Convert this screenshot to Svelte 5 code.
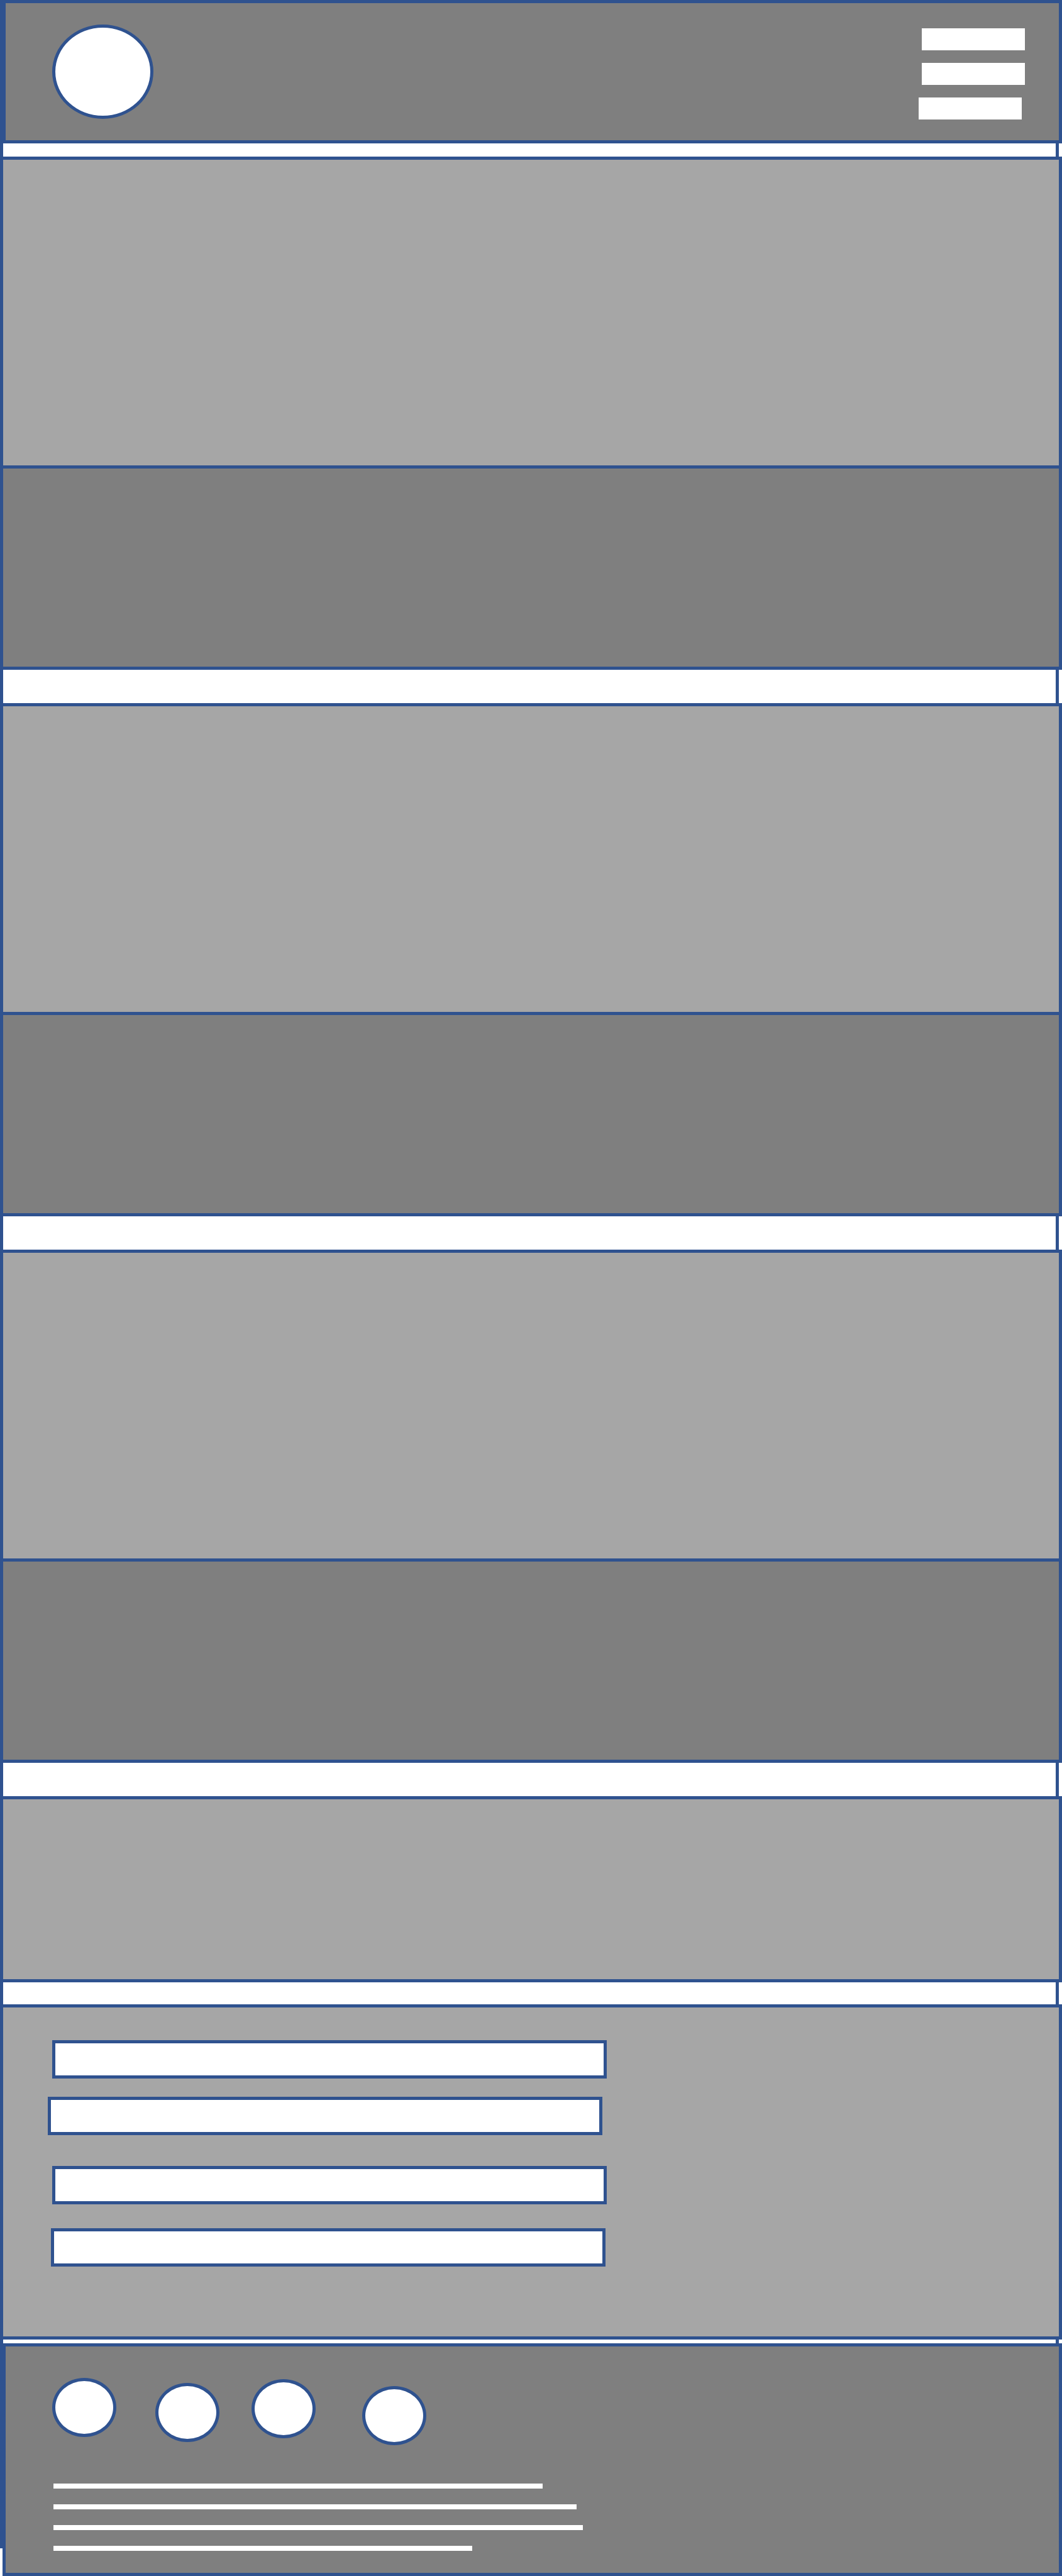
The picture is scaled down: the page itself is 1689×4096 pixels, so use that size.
<script>
  const features = ['first', 'second', 'third'];

  const fields = [
    { id: 'name', label: 'Name', type: 'text' },
    { id: 'email', label: 'Email', type: 'email' },
    { id: 'phone', label: 'Phone', type: 'tel' },
    { id: 'message', label: 'Message', type: 'text' },
  ];

  const socials = ['one', 'two', 'three', 'four'];

  // Lengths of the footer text lines, relative to the longest one.
  const lengths = [778, 832, 842, 666];
  const longest = Math.max(...lengths);
</script>

<div class="page">
  <header class="bar">
    <a class="disc logo" href="#home" aria-label="Home"></a>
    <button class="menu" type="button" aria-label="Menu">
      <span></span>
      <span></span>
      <span></span>
    </button>
  </header>

  <main>
    <div class="features">
      {#each features as feature (feature)}
        <article>
          <div class="picture"></div>
          <div class="caption"></div>
        </article>
      {/each}
      <section class="banner"></section>
    </div>

    <form class="contact">
      <div class="fields">
        {#each fields as field (field.id)}
          <input class={field.id} type={field.type} aria-label={field.label} />
        {/each}
      </div>
    </form>
  </main>

  <footer class="bar">
    <nav class="socials" aria-label="Social links">
      {#each socials as social (social)}
        <a class="disc {social}" href="#{social}" aria-label="Social link {social}"></a>
      {/each}
    </nav>
    <div class="lines">
      {#each lengths as length}
        <span style:width="{(length / longest) * 100}%"></span>
      {/each}
    </div>
  </footer>
</div>

<style>
  :global(body) {
    margin: 0;
    background: #fff;
    font-family: 'Liberation Sans', Arial, sans-serif;
  }

  .page,
  .page * {
    box-sizing: border-box;
  }

  /* The outer frame shows as two vertical rules in the gaps between bands. */
  .page {
    --line: #2f528f;
    --dark: #7f7f7f;
    --light: #a6a6a6;
    --edge: 5px solid var(--line);
    background:
      linear-gradient(var(--line), var(--line)) left top / 5px calc(100% - 44px) no-repeat,
      linear-gradient(var(--line), var(--line)) right 5px top / 5px calc(100% - 44px) no-repeat,
      #fff;
  }

  .bar {
    margin-left: 4px;
    border: var(--edge);
    background: var(--dark);
  }

  header {
    display: flex;
    align-items: center;
    justify-content: space-between;
    min-height: 228px;
    padding: 0 54px 0 74px;
  }

  .disc {
    display: block;
    border: var(--edge);
    border-radius: 50%;
    background: #fff;
  }

  .logo {
    width: 161px;
    height: 150px;
  }

  .menu {
    display: flex;
    flex-direction: column;
    align-items: flex-end;
    gap: 20px;
    width: 169px;
    padding: 7px 0 0;
    border: 0;
    background: none;
    cursor: pointer;
  }

  .menu span {
    width: 164px;
    height: 35px;
    background: #fff;
  }

  .menu span:last-child {
    align-self: flex-start;
  }

  .features {
    display: grid;
    gap: 53px;
    padding: 21px 0 35px;
  }

  .picture {
    height: 496px;
    border: var(--edge);
    background: var(--light);
  }

  .caption {
    height: 320px;
    border: var(--edge);
    border-top: 0;
    background: var(--dark);
  }

  .banner {
    height: 296px;
    border: var(--edge);
    background: var(--light);
  }

  .contact {
    display: grid;
    grid-template-columns: 889fr 719fr;
    margin-bottom: 6px;
    padding: 52px 0 111px 71px;
    border: var(--edge);
    background: var(--light);
  }

  .fields {
    display: flex;
    flex-direction: column;
    align-items: flex-end;
  }

  input {
    width: calc(100% - 7px);
    height: 61px;
    margin: 0;
    padding: 0 16px;
    border: var(--edge);
    border-radius: 0;
    background: #fff;
    font: 24px 'Liberation Sans', Arial, sans-serif;
  }

  .email {
    align-self: flex-start;
    margin: 29px 0 49px;
  }

  .message {
    margin: 38px 2px 0 0;
  }

  footer {
    min-height: 370px;
    padding: 50px 0 35px 74px;
  }

  .socials {
    display: flex;
    align-items: flex-start;
    height: 168px;
  }

  .socials .disc {
    width: 102px;
    height: 94px;
  }

  .socials .two {
    margin: 8px 51px 0 62px;
  }

  .socials .three {
    margin: 2px 74px 0 0;
  }

  .socials .four {
    margin-top: 13px;
  }

  .lines {
    display: grid;
    gap: 25px;
    width: 53%;
    max-width: 844px;
    padding-left: 2px;
  }

  .lines span {
    height: 8px;
    background: #fff;
  }
</style>
